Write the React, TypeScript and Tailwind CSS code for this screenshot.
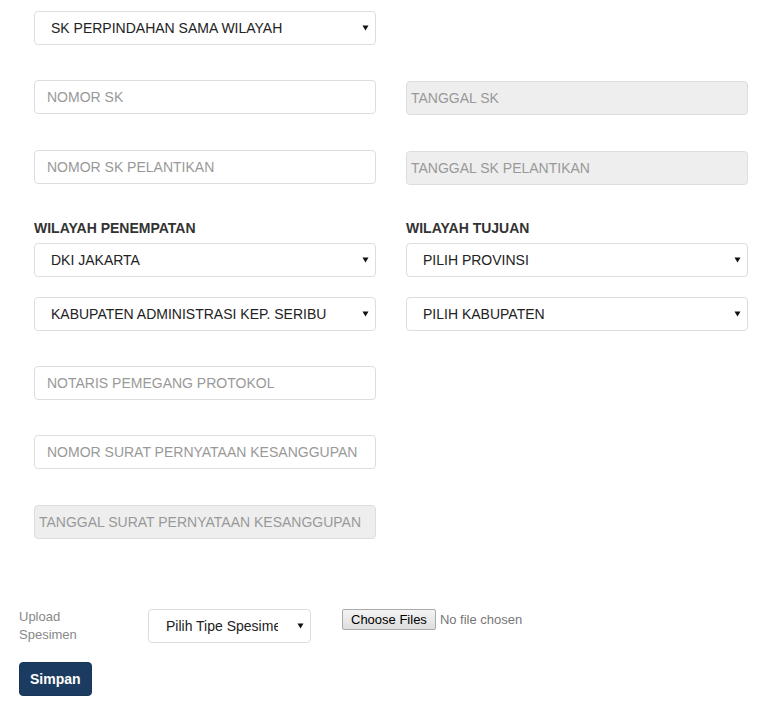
import type { ReactNode } from 'react';

const arrow = (
  <svg
    width="7"
    height="6"
    viewBox="0 0 7 6"
    className="pointer-events-none absolute right-[7px] top-1/2 -translate-y-1/2"
  >
    <polygon points="0.5,0.5 6.5,0.5 3.5,5.5" fill="#111" />
  </svg>
);

function SelectBox({ value, className = '' }: { value: string; className?: string }) {
  return (
    <div className={`relative ${className}`}>
      <select
        defaultValue={value}
        className="block h-[34px] w-full appearance-none rounded border border-[#ddd] bg-white pl-4 pr-8 text-sm text-[#222] outline-none"
      >
        <option value={value}>{value}</option>
      </select>
      {arrow}
    </div>
  );
}

function TextInput({ placeholder, disabled = false }: { placeholder: string; disabled?: boolean }) {
  return (
    <input
      type="text"
      placeholder={placeholder}
      disabled={disabled}
      className={
        disabled
          ? 'block h-[34px] w-full rounded border border-[#ddd] bg-[#eee] px-1 text-sm placeholder:text-[#999] outline-none'
          : 'block h-[34px] w-full rounded border border-[#ddd] bg-white px-3 text-sm placeholder:text-[#999] outline-none'
      }
    />
  );
}

function Row({ left, right }: { left?: ReactNode; right?: ReactNode }) {
  return (
    <div className="grid grid-cols-2 gap-[30px]">
      <div>{left}</div>
      <div>{right}</div>
    </div>
  );
}

export default function App() {
  return (
    <div className="min-h-[710px] w-[780px] bg-white font-['Liberation_Sans',Arial,sans-serif] text-[#333]">
      {/* form utama */}
      <div className="pl-[34px] pr-[32px] pt-[11px]">
        <Row left={<SelectBox value="SK PERPINDAHAN SAMA WILAYAH" />} />

        <div className="mt-[35px]">
          <Row
            left={<TextInput placeholder="NOMOR SK" />}
            right={
              <div className="mt-px">
                <TextInput placeholder="TANGGAL SK" disabled />
              </div>
            }
          />
        </div>

        <div className="mt-[35px]">
          <Row
            left={<TextInput placeholder="NOMOR SK PELANTIKAN" />}
            right={
              <div className="mt-px">
                <TextInput placeholder="TANGGAL SK PELANTIKAN" disabled />
              </div>
            }
          />
        </div>

        <div className="mt-[33px]">
          <Row
            left={
              <>
                <label className="mb-[5px] block text-sm leading-5 font-bold text-[#333]">
                  WILAYAH PENEMPATAN
                </label>
                <SelectBox value="DKI JAKARTA" />
                <SelectBox value="KABUPATEN ADMINISTRASI KEP. SERIBU" className="mt-[20px]" />
              </>
            }
            right={
              <>
                <label className="mb-[5px] block text-sm leading-5 font-bold text-[#333]">
                  WILAYAH TUJUAN
                </label>
                <SelectBox value="PILIH PROVINSI" />
                <SelectBox value="PILIH KABUPATEN" className="mt-[20px]" />
              </>
            }
          />
        </div>

        <div className="mt-[35px]">
          <Row left={<TextInput placeholder="NOTARIS PEMEGANG PROTOKOL" />} />
        </div>
        <div className="mt-[35px]">
          <Row left={<TextInput placeholder="NOMOR SURAT PERNYATAAN KESANGGUPAN" />} />
        </div>
        <div className="mt-[36px]">
          <Row left={<TextInput placeholder="TANGGAL SURAT PERNYATAAN KESANGGUPAN" disabled />} />
        </div>
      </div>

      {/* upload spesimen */}
      <div className="mt-[70px] pl-[19px]">
        <div className="flex items-start">
          <label className="mt-[-1px] w-[129px] text-[13px] leading-[18px] text-[#888]">
            Upload
            <br />
            Spesimen
          </label>
          <div className="relative w-[163px]">
            <select
              defaultValue="Pilih Tipe Spesimen"
              className="block h-[34px] w-full appearance-none rounded border border-[#ddd] bg-white pl-[17px] pr-[32px] text-sm text-[#222] outline-none"
            >
              <option>Pilih Tipe Spesimen</option>
            </select>
            {arrow}
          </div>
          <div className="ml-[31px] flex items-center">
            <button
              type="button"
              className="h-[21px] rounded-[2px] border border-[#a9a9a9] bg-gradient-to-b from-[#f4f4f4] to-[#dedede] px-[8px] text-[13px] leading-[19px] text-black"
            >
              Choose Files
            </button>
            <span className="ml-[4px] text-[13px] text-[#777]">No file chosen</span>
          </div>
        </div>

        <button
          type="button"
          className="mt-[18px] h-[34px] rounded border border-[#183656] bg-[#1b3c60] px-[10px] text-sm font-bold text-white"
        >
          Simpan
        </button>
      </div>
    </div>
  );
}
